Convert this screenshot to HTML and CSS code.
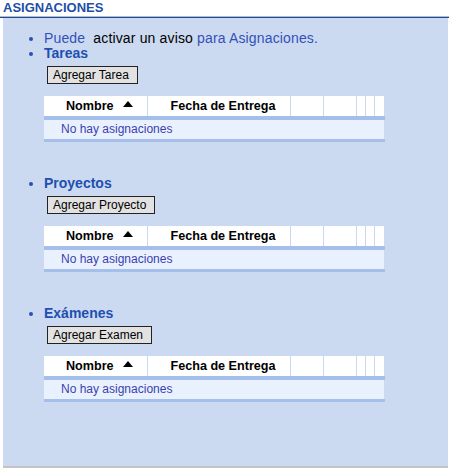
FILE: index.html
```html
<!DOCTYPE html>
<html>
<head>
<meta charset="utf-8">
<link rel="stylesheet" href="styles.css">
</head>
<body>
<div class="page">
  <div class="title">ASIGNACIONES</div>
  <div class="rule"></div>
  <div class="panel">
    <ul class="list">
      <li class="intro"><span class="blue">Puede</span>&nbsp; <span class="black">activar un aviso</span> <span class="blue">para Asignaciones.</span></li>
      <li class="section">
        <div class="sec-title">Tareas</div>
        <button class="btn">Agregar Tarea</button>
        <div class="grid">
          <div class="head">
            <div class="c c1">Nombre <svg class="arrow" width="10" height="6" viewBox="0 0 10 6"><polygon points="0,6 10,6 5,0" fill="#000"/></svg></div>
            <div class="c c2">Fecha de Entrega</div>
            <div class="c c3"></div><div class="c c3"></div><div class="c c4"></div><div class="c c4"></div><div class="c c4 last"></div>
          </div>
          <div class="bar top"></div>
          <div class="row">No hay asignaciones</div>
          <div class="bar bottom"></div>
        </div>
      </li>
      <li class="section">
        <div class="sec-title">Proyectos</div>
        <button class="btn">Agregar Proyecto</button>
        <div class="grid">
          <div class="head">
            <div class="c c1">Nombre <svg class="arrow" width="10" height="6" viewBox="0 0 10 6"><polygon points="0,6 10,6 5,0" fill="#000"/></svg></div>
            <div class="c c2">Fecha de Entrega</div>
            <div class="c c3"></div><div class="c c3"></div><div class="c c4"></div><div class="c c4"></div><div class="c c4 last"></div>
          </div>
          <div class="bar top"></div>
          <div class="row">No hay asignaciones</div>
          <div class="bar bottom"></div>
        </div>
      </li>
      <li class="section">
        <div class="sec-title">Exámenes</div>
        <button class="btn">Agregar Examen</button>
        <div class="grid">
          <div class="head">
            <div class="c c1">Nombre <svg class="arrow" width="10" height="6" viewBox="0 0 10 6"><polygon points="0,6 10,6 5,0" fill="#000"/></svg></div>
            <div class="c c2">Fecha de Entrega</div>
            <div class="c c3"></div><div class="c c3"></div><div class="c c4"></div><div class="c c4"></div><div class="c c4 last"></div>
          </div>
          <div class="bar top"></div>
          <div class="row">No hay asignaciones</div>
          <div class="bar bottom"></div>
        </div>
      </li>
    </ul>
  </div>
</div>
</body>
</html>
```

FILE: styles.css
```css
html, body {
  margin: 0;
  padding: 0;
  background: #ffffff;
  font-family: "Liberation Sans", Arial, sans-serif;
}
.page {
  width: 449px;
}
.title {
  box-sizing: border-box;
  height: 17px;
  padding-left: 3px;
  font-size: 13px;
  line-height: 16px;
  color: #1d4fa8;
  font-weight: bold;
  border-bottom: 1px solid #b4bccb;
}
.rule {
  height: 1px;
  background: #1e4c9c;
}
.panel {
  margin-left: 3px;
  width: 445px;
  height: 450px;
  box-sizing: border-box;
  background: #cbdaf0;
  border-bottom: 2px solid #c4c4c4;
  padding-top: 13px;
}
.list {
  margin: 0;
  padding: 0 0 0 41px;
  font-size: 14px;
  line-height: 15px;
  color: #2a50b0;
}
.list li::marker {
  color: #2a50b0;
  font-size: 13px;
}
.intro {
  letter-spacing: 0.15px;
}
.blue { color: #3450b8; }
.black { color: #000; }
.section {
  margin-bottom: 34px;
}
.sec-title {
  font-weight: bold;
  color: #1f4fb0;
}
.btn {
  display: block;
  margin: 5px 0 0 3px;
  height: 18px;
  padding: 0 8px 0 5px;
  font-family: "Liberation Sans", Arial, sans-serif;
  font-size: 12px;
  line-height: 16px;
  color: #000;
  background: #e2e2e2;
  border: 1px solid #222;
  border-radius: 0;
}
.grid {
  margin-top: 12px;
  width: 341px;
}
.head {
  display: flex;
  height: 20px;
  background: #fff;
  width: 340px;
}
.c {
  box-sizing: border-box;
  border-right: 1px solid #c9d8f0;
  height: 20px;
  font-size: 12.6px;
  font-weight: bold;
  color: #000;
  line-height: 20px;
  text-align: center;
}
.c1 { width: 104px; padding-left: 8px; }
.c2 { width: 143px; padding-left: 8px; }
.c3 { width: 33px; }
.c4 { width: 9px; }
.c4.last { border-right: none; }
.arrow {
  vertical-align: 3px;
  margin-left: 6px;
}
.bar {
  background: #a3bfea;
}
.bar.top { height: 4px; }
.bar.bottom { height: 3px; }
.row {
  height: 19px;
  width: 340px;
  background: #eaf1fe;
  padding-left: 17px;
  box-sizing: border-box;
  font-size: 12px;
  line-height: 19px;
  color: #3a3fb0;
}
```
